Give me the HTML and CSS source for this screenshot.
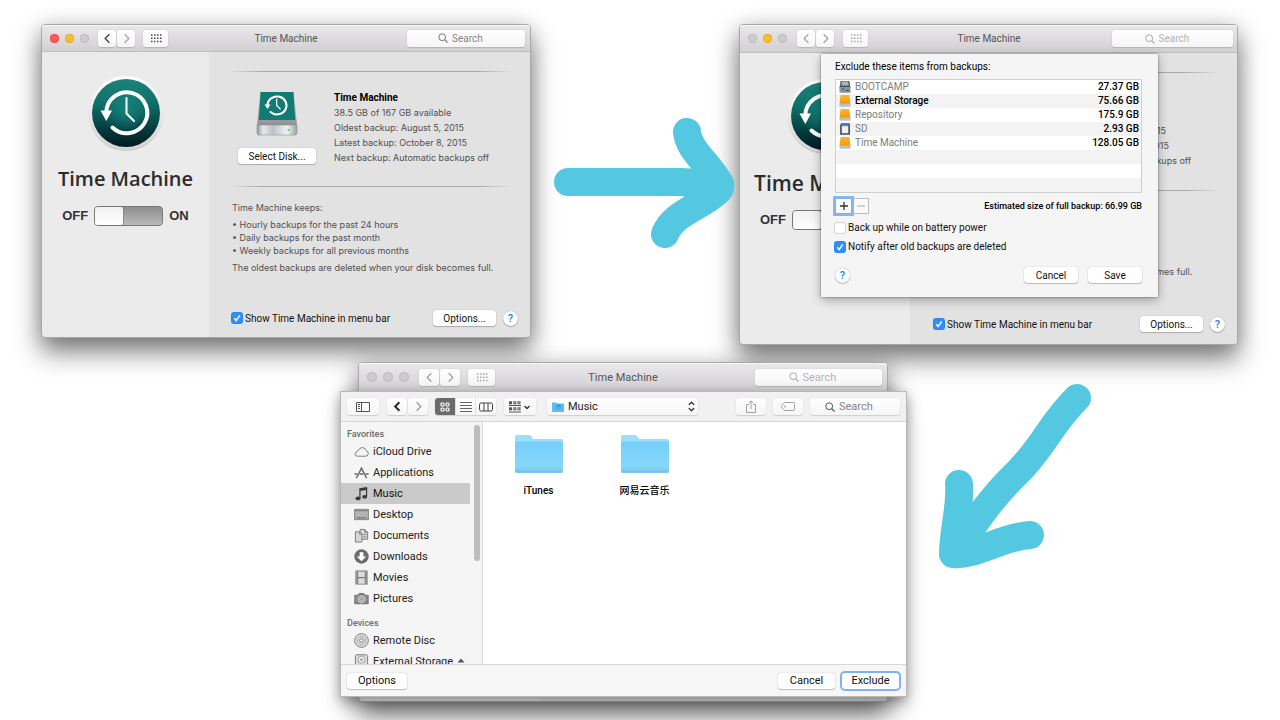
FILE: index.html
```html
<!DOCTYPE html>
<html lang="en">
<head>
<meta charset="utf-8">
<title>Time Machine</title>
<link rel="stylesheet" href="styles.css">
</head>
<body>
<svg class="defs" width="0" height="0" aria-hidden="true">
  <defs>
    <linearGradient id="g-teal" x1="0" y1="0" x2="0" y2="1"><stop offset="0" stop-color="#1d8279"/><stop offset=".35" stop-color="#10706a"/><stop offset=".75" stop-color="#04393c"/><stop offset="1" stop-color="#001a20"/></linearGradient>
    <radialGradient id="g-glow" cx=".5" cy=".5" r=".5"><stop offset="0" stop-color="#14857d" stop-opacity=".9"/><stop offset="1" stop-color="#14857d" stop-opacity="0"/></radialGradient>
    <linearGradient id="g-ring" x1="0" y1="0" x2="0" y2="1"><stop offset="0" stop-color="#fff"/><stop offset="1" stop-color="#d4d4d4"/></linearGradient>
    <linearGradient id="g-side" x1="0" y1="0" x2="0" y2="1"><stop offset="0" stop-color="#d5d7d7"/><stop offset="1" stop-color="#8d8f90"/></linearGradient>
    <linearGradient id="g-base" x1="0" y1="0" x2="1" y2="0"><stop offset="0" stop-color="#8e9698"/><stop offset=".15" stop-color="#e4e9ea"/><stop offset=".4" stop-color="#bcc3c5"/><stop offset=".75" stop-color="#eff2f2"/><stop offset="1" stop-color="#9aa1a3"/></linearGradient>
    <linearGradient id="g-orange" x1="0" y1="0" x2="0" y2="1"><stop offset="0" stop-color="#fbb829"/><stop offset="1" stop-color="#f59a0c"/></linearGradient>
    <linearGradient id="g-folder" x1="0" y1="0" x2="0" y2="1"><stop offset="0" stop-color="#74cff8"/><stop offset=".8" stop-color="#87d8fa"/><stop offset="1" stop-color="#71c5ec"/></linearGradient>
    <symbol id="i-clock" viewBox="0 0 76 76">
      <circle cx="38" cy="39" r="37" fill="#c9c9c9"/>
      <circle cx="38" cy="38" r="37" fill="url(#g-ring)"/>
      <circle cx="38" cy="38" r="34" fill="url(#g-teal)"/>
      <circle cx="38" cy="34" r="26" fill="url(#g-glow)"/>
      <path d="M18.300 37A20.500 20.500 0 1 1 24.500 52.500" fill="none" stroke="#fff" stroke-width="4" stroke-linecap="round"/>
      <path d="M12.500 35.500h11.500l-5.700 10.500z" fill="#fff"/>
      <path d="M38.500 23v15.500l7.500 7.500" fill="none" stroke="#fff" stroke-width="2" stroke-linecap="round"/>
    </symbol>
    <symbol id="i-disk" viewBox="0 0 42 46">
      <path d="M4 1h34l3 34H1z" fill="url(#g-side)"/>
      <path d="M4.500 1h33l1.700 28H2.800z" fill="#127c74"/>
      <path d="M1 34h40v8q0 2-2 2H3q-2 0-2-2z" fill="url(#g-base)" stroke="#8c9294" stroke-width=".6"/>
      <circle cx="32.500" cy="39" r="1" fill="#5ec93c"/>
      <path d="M11.500 14a9.500 9 0 1 1 3 7" fill="none" stroke="#fff" stroke-width="2" stroke-linecap="round"/>
      <path d="M8.500 13.500h6l-3 4.500z" fill="#fff"/>
      <path d="M20.700 8v6.500l3.500 3.500" fill="none" stroke="#fff" stroke-width="1.200" stroke-linecap="round"/>
    </symbol>
    <symbol id="i-left" viewBox="0 0 16 16"><path d="M10 3.500L5.500 8l4.500 4.500" fill="none" stroke="currentColor"/></symbol>
    <symbol id="i-right" viewBox="0 0 16 16"><path d="M6 3.500L10.500 8 6 12.500" fill="none" stroke="currentColor"/></symbol>
    <symbol id="i-grid" viewBox="0 0 12 9"><path d="M1 1h11M1 4.300h11M1 7.600h11" fill="none" stroke="currentColor" stroke-width="1.500" stroke-dasharray="1.500 1.500"/></symbol>
    <symbol id="i-find" viewBox="0 0 10 10"><circle cx="4.200" cy="4.200" r="3.400" fill="none" stroke="currentColor"/><path d="M6.700 6.700L9.500 9.500" stroke="currentColor" stroke-width="1.200"/></symbol>
    <symbol id="i-drive" viewBox="0 0 12 12"><path d="M1.500 0h9l.9 8.500H.6z" fill="url(#g-orange)"/><path d="M.5 8.500h11v2.500q0 .8-.8.800H1.300q-.8 0-.8-.8z" fill="#b9c3cd"/><path d="M.7 8.600h10.600" stroke="#d8931f" stroke-width=".6"/></symbol>
    <symbol id="i-internal" viewBox="0 0 12 12"><path d="M1.700 0h8.600l1.200 7H.5z" fill="#47525a"/><path d="M3 .5h6l.8 4H2.200z" fill="#a9b6be"/><path d="M.5 6h11v5.200q0 .6-.6.600H1.100q-.6 0-.6-.6z" fill="#87929a"/><path d="M3 8h2M7 9.500h3" stroke="#3c464d"/></symbol>
    <symbol id="i-sd" viewBox="0 0 12 12"><path d="M2.500.3h7.700l.8 1v9.900q0 .5-.5.500H1.600q-.5 0-.5-.5V1.800z" fill="#4a525a"/><path d="M2.800 2h6.500v8.200H2.800z" fill="#eef3f8"/><path d="M2.800 1.500h6.500v1.800H2.800z" fill="#4f93e0"/></symbol>
    <symbol id="i-folder" viewBox="0 0 48 38"><path d="M0 36V2Q0 0 2 0h12q1.500 0 2.500 1.500L18 4h28q2 0 2 2v30z" fill="#9bdffb"/><path d="M0 8q0-1.500 1.500-1.500h45Q48 6.500 48 8v28q0 1.500-1.500 1.500h-45Q0 37.500 0 36z" fill="url(#g-folder)"/><path d="M.5 37.300h47" stroke="#5fb0d6" stroke-width=".7"/></symbol>
  </defs>
</svg>

<main class="stage">
  <section class="window window-main" aria-label="Time Machine preferences">
    <header class="titlebar">
      <div class="tb-left">
        <div class="lights"><span class="light red"></span><span class="light yellow"></span><span class="light"></span></div>
        <div class="nav">
          <button class="tb-btn" aria-label="Back"><svg class="ic-nav"><use href="#i-left"/></svg></button>
          <button class="tb-btn faded" aria-label="Forward"><svg class="ic-nav"><use href="#i-right"/></svg></button>
        </div>
        <button class="tb-btn wide" aria-label="Show all"><svg class="ic-grid"><use href="#i-grid"/></svg></button>
      </div>
      <h1 class="title">Time Machine</h1>
      <label class="search"><svg class="ic-find"><use href="#i-find"/></svg><input type="text" placeholder="Search" aria-label="Search"></label>
    </header>
    <div class="panes">
      <div class="pane-left">
        <svg class="tm-icon"><use href="#i-clock"/></svg>
        <h2 class="brand">Time Machine</h2>
        <div class="power"><span>OFF</span><button class="switch" role="switch" aria-checked="false" aria-label="Time Machine"><span class="knob"></span></button><span>ON</span></div>
      </div>
      <div class="pane-right">
        <hr class="rule">
        <div class="disk-row">
          <div class="disk"><svg class="disk-icon"><use href="#i-disk"/></svg><button class="btn">Select Disk...</button></div>
          <div class="info"><strong>Time Machine</strong><span>38.5 GB of 167 GB available</span><span>Oldest backup: August 5, 2015</span><span>Latest backup: October 8, 2015</span><span>Next backup: Automatic backups off</span></div>
        </div>
        <hr class="rule">
        <div class="keeps">
          <p>Time Machine keeps:</p>
          <ul><li>Hourly backups for the past 24 hours</li><li>Daily backups for the past month</li><li>Weekly backups for all previous months</li></ul>
          <p>The oldest backups are deleted when your disk becomes full.</p>
        </div>
        <footer class="pane-foot">
          <label class="check"><input type="checkbox" checked>Show Time Machine in menu bar</label>
          <button class="btn">Options...</button>
          <button class="help" aria-label="Help">?</button>
        </footer>
      </div>
    </div>
  </section>

  <section class="window window-exclude inactive" aria-label="Time Machine exclusions">
    <header class="titlebar">
      <div class="tb-left">
        <div class="lights"><span class="light"></span><span class="light yellow"></span><span class="light"></span></div>
        <div class="nav">
          <button class="tb-btn" aria-label="Back"><svg class="ic-nav"><use href="#i-left"/></svg></button>
          <button class="tb-btn" aria-label="Forward"><svg class="ic-nav"><use href="#i-right"/></svg></button>
        </div>
        <button class="tb-btn wide" aria-label="Show all"><svg class="ic-grid"><use href="#i-grid"/></svg></button>
      </div>
      <h1 class="title">Time Machine</h1>
      <label class="search"><svg class="ic-find"><use href="#i-find"/></svg><input type="text" placeholder="Search" aria-label="Search"></label>
    </header>
    <div class="panes">
      <div class="pane-left">
        <svg class="tm-icon"><use href="#i-clock"/></svg>
        <h2 class="brand">Time Machine</h2>
        <div class="power"><span>OFF</span><button class="switch" role="switch" aria-checked="false" aria-label="Time Machine"><span class="knob"></span></button></div>
      </div>
      <div class="pane-right">
        <hr class="rule">
        <div class="disk-row">
          <div class="disk"></div>
          <div class="info"><strong>Time Machine</strong><span>38.5 GB of 167 GB available</span><span>Oldest backup: August 5, 2015</span><span>Latest backup: October 8, 2015</span><span>Next backup: Automatic backups off</span></div>
        </div>
        <hr class="rule">
        <div class="keeps">
          <p>Time Machine keeps:</p>
          <ul><li>Hourly backups for the past 24 hours</li><li>Daily backups for the past month</li><li>Weekly backups for all previous months</li></ul>
          <p>The oldest backups are deleted when your disk becomes full.</p>
        </div>
        <footer class="pane-foot">
          <label class="check"><input type="checkbox" checked>Show Time Machine in menu bar</label>
          <button class="btn">Options...</button>
          <button class="help" aria-label="Help">?</button>
        </footer>
      </div>
    </div>

    <div class="sheet" role="dialog" aria-labelledby="sheet-title">
      <h2 class="sheet-title" id="sheet-title">Exclude these items from backups:</h2>
      <table class="items">
        <tbody>
          <tr><td><svg class="ic-row"><use href="#i-internal"/></svg></td><td class="name">BOOTCAMP</td><td class="size">27.37 GB</td></tr>
          <tr class="on"><td><svg class="ic-row"><use href="#i-drive"/></svg></td><td class="name">External Storage</td><td class="size">75.66 GB</td></tr>
          <tr><td><svg class="ic-row"><use href="#i-drive"/></svg></td><td class="name">Repository</td><td class="size">175.9 GB</td></tr>
          <tr><td><svg class="ic-row"><use href="#i-sd"/></svg></td><td class="name">SD</td><td class="size">2.93 GB</td></tr>
          <tr><td><svg class="ic-row"><use href="#i-drive"/></svg></td><td class="name">Time Machine</td><td class="size">128.05 GB</td></tr>
          <tr><td></td><td></td><td></td></tr>
          <tr><td></td><td></td><td></td></tr>
          <tr><td></td><td></td><td></td></tr>
        </tbody>
      </table>
      <div class="edit-row">
        <button class="sq focus" aria-label="Add"><svg width="10" height="10"><path d="M5 1v8M1 5h8" stroke="#333" stroke-width="1.300"/></svg></button>
        <button class="sq" aria-label="Remove" disabled><svg width="10" height="10"><path d="M1 5h8" stroke="#b5b5b5" stroke-width="1.200"/></svg></button>
        <span class="estimate">Estimated size of full backup: 66.99 GB</span>
      </div>
      <label class="check"><input type="checkbox">Back up while on battery power</label>
      <label class="check"><input type="checkbox" checked>Notify after old backups are deleted</label>
      <div class="sheet-foot">
        <button class="help" aria-label="Help">?</button>
        <button class="btn">Cancel</button>
        <button class="btn">Save</button>
      </div>
    </div>
  </section>

  <section class="window window-back inactive" aria-label="Time Machine">
    <header class="titlebar">
      <div class="tb-left">
        <div class="lights"><span class="light"></span><span class="light"></span><span class="light"></span></div>
        <div class="nav">
          <button class="tb-btn" aria-label="Back"><svg class="ic-nav"><use href="#i-left"/></svg></button>
          <button class="tb-btn" aria-label="Forward"><svg class="ic-nav"><use href="#i-right"/></svg></button>
        </div>
        <button class="tb-btn wide" aria-label="Show all"><svg class="ic-grid"><use href="#i-grid"/></svg></button>
      </div>
      <h1 class="title">Time Machine</h1>
      <label class="search"><svg class="ic-find"><use href="#i-find"/></svg><input type="text" placeholder="Search" aria-label="Search"></label>
    </header>
    <div class="panes"><div class="pane-left"></div><div class="pane-right"></div></div>
  </section>

  <section class="picker" role="dialog" aria-label="Choose a folder to exclude">
    <header class="toolbar">
      <button class="tool t-side" aria-label="Sidebar"><svg width="14" height="10"><path d="M.5.5h13v9H.5zM5.500.5v9M2 2.500h2M2 4.500h2M2 6.500h2" fill="none" stroke="#555"/></svg></button>
      <div class="nav">
        <button class="tool t-nav strong" aria-label="Back"><svg class="ic-nav"><use href="#i-left"/></svg></button>
        <button class="tool t-nav faded" aria-label="Forward"><svg class="ic-nav"><use href="#i-right"/></svg></button>
      </div>
      <div class="seg">
        <button class="active" aria-label="Icons"><svg width="10" height="10" fill="none" stroke="#fff" stroke-width="1.200"><rect x="1" y="1" width="3" height="3" rx="1"/><rect x="6" y="1" width="3" height="3" rx="1"/><rect x="1" y="6" width="3" height="3" rx="1"/><rect x="6" y="6" width="3" height="3" rx="1"/></svg></button>
        <button aria-label="List"><svg width="12" height="10"><path d="M0 .5h12M0 3.500h12M0 6.500h12M0 9.500h12" stroke="#666"/></svg></button>
        <button aria-label="Columns"><svg width="14" height="10"><rect x=".5" y="1" width="13" height="8" rx="1.500" fill="none" stroke="#444"/><path d="M5 1v8M9 1v8" stroke="#444"/></svg></button>
      </div>
      <button class="tool t-arr" aria-label="Arrange"><svg width="22" height="12" fill="none" stroke="#555"><path d="M0 4.500h12M0 11h12" /><g stroke-width="1"><rect x=".5" y=".8" width="2" height="2"/><rect x="4.800" y=".8" width="2" height="2"/><rect x="9" y=".8" width="2" height="2"/><rect x=".5" y="6.800" width="2" height="2"/><rect x="4.800" y="6.800" width="2" height="2"/><rect x="9" y="6.800" width="2" height="2"/></g><path d="M15.500 5l2.500 2.500L20.500 5" stroke="#333" stroke-width="1.400"/></svg></button>
      <div class="where">
        <svg class="where-folder" viewBox="0 0 12 10"><path d="M0 9V1q0-.5.5-.5h3.500l1 1H11.500q.5 0 .5.500v7.500q0 .5-.5.500H.5Q0 9.500 0 9z" fill="#5bbdf0"/><path d="M5 7.500V3.500l3-.5v4" fill="none" stroke="#1c7fb5" stroke-width=".8"/></svg>
        <select aria-label="Location"><option>Music</option></select>
        <svg class="where-arrows" viewBox="0 0 8 12"><path d="M1.500 4.500L4 2l2.500 2.500M1.500 7.500L4 10l2.500-2.500" fill="none" stroke="#333" stroke-width="1.300"/></svg>
      </div>
      <button class="tool t-act push" aria-label="Share"><svg width="10" height="13" fill="none" stroke="#a0a0a0"><path d="M3 4.500H.5v8h9v-8H7M5 9V1M2.800 3L5 .8 7.200 3"/></svg></button>
      <button class="tool t-act" aria-label="Tags"><svg width="14" height="9" fill="none" stroke="#a0a0a0"><path d="M4 .5h8.500q1 0 1 1v6q0 1-1 1H4Q2.500 8 .7 5.300V3.700Q2.500 1 4 .5z"/><circle cx="4" cy="4.500" r=".6"/></svg></button>
      <label class="search"><svg class="ic-find"><use href="#i-find"/></svg><input type="text" placeholder="Search" aria-label="Search files"></label>
    </header>
    <div class="browser">
      <nav class="sidebar" aria-label="Places">
        <h3>Favorites</h3>
        <ul>
          <li><a href="#"><svg viewBox="0 0 16 16"><path d="M4 13h8.500a3 3 0 0 0 .5-5.900A4.200 4.200 0 0 0 5 6.500 2.500 2.500 0 0 0 3 8.500 2.300 2.300 0 0 0 4 13z" fill="none" stroke="#777"/></svg>iCloud Drive</a></li>
          <li><a href="#"><svg viewBox="0 0 16 16" fill="none" stroke="#666"><path d="M2.500 14L8.500 2.500M13.500 14L7.500 2.500" stroke-width="1.500"/><path d="M.5 9.500h3M6 9.500h4M12.500 9.500h3" stroke-width="1.600"/></svg>Applications</a></li>
          <li class="current"><a href="#"><svg viewBox="0 0 16 16"><path d="M5.700 2.500L14 1v3L7 5.200" fill="#3a3a3a"/><path d="M6.300 3v10M13.400 2v9" stroke="#3a3a3a" stroke-width="1.300"/><ellipse cx="4.300" cy="13.300" rx="2.700" ry="2" fill="#3a3a3a"/><ellipse cx="11.400" cy="11.500" rx="2.600" ry="2" fill="#3a3a3a"/></svg>Music</a></li>
          <li><a href="#"><svg viewBox="0 0 16 16"><rect x=".7" y="2.500" width="14.600" height="11" fill="#b4b4b4" stroke="#808080"/><path d="M1 4h14" stroke="#777"/><path d="M3 11.500h10" stroke="#666" stroke-width="1.500" stroke-dasharray="1.500 .7"/></svg>Desktop</a></li>
          <li><a href="#"><svg viewBox="0 0 16 16" fill="#d8d8d8" stroke="#777"><path d="M6.500 1.500h5l3 3v7.500h-8z"/><path d="M11.500 1.500v3h3" fill="none"/><path d="M1.500 4h4.500l2.500 2.500V15h-7z"/><path d="M6 4v2.500h2.500M10 7h3M10 9.500h3" fill="none"/></svg>Documents</a></li>
          <li><a href="#"><svg viewBox="0 0 16 16"><circle cx="8" cy="8" r="7.700" fill="#6c6c6c"/><path d="M6 3.500h4V8h3l-5 5-5-5h3z" fill="#fff"/></svg>Downloads</a></li>
          <li><a href="#"><svg viewBox="0 0 16 16"><path d="M1.500.5h13v15h-13z" fill="#777"/><path d="M4.500 1.500h7v6h-7zM4.500 8.700h7v6h-7z" fill="#dcdcdc"/><path d="M3 1v14M13 1v14" stroke="#ddd" stroke-dasharray="1.200 1.200"/></svg>Movies</a></li>
          <li><a href="#"><svg viewBox="0 0 16 16"><path d="M.3 5q0-1 1-1h3l1.200-2h5l1.200 2h3q1 0 1 1v8q0 1-1 1H1.300q-1 0-1-1z" fill="#777"/><circle cx="8" cy="8.800" r="4" fill="#999" stroke="#ddd" stroke-width=".9"/><circle cx="8" cy="8.800" r="2" fill="none" stroke="#ddd" stroke-width=".8"/><path d="M2.500 4v10M13.500 4v10" stroke="#aaa" stroke-width=".7"/></svg>Pictures</a></li>
        </ul>
        <h3>Devices</h3>
        <ul>
          <li><a href="#"><svg viewBox="0 0 16 16" fill="none" stroke="#777"><circle cx="8" cy="8" r="7.300" fill="#dedede"/><circle cx="8" cy="8" r="4.500" stroke="#999" stroke-width=".8"/><circle cx="8" cy="8" r="2" fill="#f5f5f5"/></svg>Remote Disc</a></li>
          <li><a href="#"><svg viewBox="0 0 16 16" fill="none" stroke="#777"><path d="M2.500.8h11l1 1.500V15h-13V2.300z" fill="#dedede"/><circle cx="8" cy="6" r="3.800" fill="#f2f2f2" stroke="#999"/><circle cx="8" cy="6" r="1"/><path d="M1.500 11.500h13" stroke="#999"/></svg>External Storage<svg class="eject" viewBox="0 0 8 8"><path d="M4 .5L7.500 4.500h-7zM.5 6h7v1.200h-7z" fill="#555"/></svg></a></li>
        </ul>
        <span class="scrollbar"></span>
      </nav>
      <div class="files">
        <figure><svg class="folder"><use href="#i-folder"/></svg><figcaption>iTunes</figcaption></figure>
        <figure><svg class="folder"><use href="#i-folder"/></svg><figcaption lang="zh">网易云音乐</figcaption></figure>
      </div>
    </div>
    <footer class="picker-foot">
      <button class="btn">Options</button>
      <button class="btn push">Cancel</button>
      <button class="btn default">Exclude</button>
    </footer>
  </section>

  <svg class="arrow arrow-right" viewBox="0 0 190 140" aria-hidden="true"><path d="M18 67h112l40 2M137 17C139 36 158 47 170 68.500Q171 72 169 75C152 92 124 97 115 119" /><path class="fill" d="M130 60L165 60 165 85 135 85z"/></svg>
  <svg class="arrow arrow-down" viewBox="0 0 170 200" aria-hidden="true"><path d="M146 22C120 47 112 72 85 98 60 122 45 145 23 177M28 108C30 130 22 155 22 178C45 180 70 161 99 159"/></svg>
</main>
</body>
</html>
```
FILE: styles.css
```css
* { box-sizing: border-box; }

body {
  margin: 0;
  background: #fff;
  color: #1c1c1c;
  font: 10px/15px Roboto, "Liberation Sans", "Noto Sans CJK SC", sans-serif;
}

h1, h2, h3, p, ul, figure { margin: 0; padding: 0; font: inherit; }
ul { list-style: none; }
button, input, select { font: inherit; color: inherit; margin: 0; padding: 0; border: 0; background: none; }
svg { display: block; flex: none; }
a { color: inherit; text-decoration: none; }
.defs { position: absolute; }

.stage { position: relative; min-height: 100vh; overflow: hidden; }

/* Windows on the canvas */
.window {
  position: absolute;
  display: flex;
  flex-direction: column;
  border: 1px solid #a8a8a8;
  border-radius: 4px;
  background: #ebebeb;
  box-shadow: 0 14px 26px rgba(0, 0, 0, .5), 0 0 20px rgba(0, 0, 0, .14);
}
.window-main { left: 41px; top: 24px; width: 490px; height: 314px; --bar: 27px; --left: 167px; --search: 118px; --inset: 23px; }
.window-exclude { left: 739px; top: 24px; width: 499px; height: 321px; --bar: 28px; --left: 170px; --search: 121px; --inset: 21px; }
.window-back { left: 358px; top: 362px; width: 530px; height: 340px; font-size: 11px; --bar: 29px; --left: 181px; --search: 127px; --inset: 23px; }

.titlebar {
  display: grid;
  grid-template-columns: 1fr auto 1fr;
  align-items: center;
  height: var(--bar);
  padding: 0 5px;
  border-bottom: 1px solid #bebcbf;
  border-radius: 3px 3px 0 0;
  background: linear-gradient(#eae8eb, #d2d0d3);
  box-shadow: inset 0 1px #f7f6f7;
}
.title { color: #555; }
.tb-left, .lights, .nav { display: flex; align-items: center; }
.lights { gap: 6px; margin: 0 9px 0 3px; }
.inactive .lights { margin-right: 10px; }
.nav { gap: 1px; }
.light { width: 9px; height: 9px; border-radius: 50%; background: #cdcbcd; box-shadow: 0 0 0 1px #bdbbbd inset; }
.red { background: #fc5b57; box-shadow: 0 0 0 1px #e5514e inset; }
.yellow { background: #fdbe2d; box-shadow: 0 0 0 1px #eaa925 inset; }
.window-back .light { width: 10px; height: 10px; }

.tb-btn, .tool, .search, .seg, .where {
  display: flex;
  align-items: center;
  justify-content: center;
  height: 17px;
  border-radius: 3px;
  background: linear-gradient(#fff, #f5f5f5);
  box-shadow: 0 0 1px rgba(0, 0, 0, .25), 0 1px 1px rgba(0, 0, 0, .12);
}
.tb-btn { width: 18px; color: #444; }
.tb-btn.wide { width: 25px; margin-left: 8px; }
.faded, .inactive .tb-btn { color: #a5a5a5; }
.window-exclude .tb-btn.wide { margin-left: 9px; }
.window-back .tb-btn { width: 20px; }
.window-back .tb-btn.wide { width: 27px; }
.ic-nav { width: 15px; height: 15px; stroke-width: 1.400; }
.strong .ic-nav { stroke-width: 2; }
.ic-grid { width: 12px; height: 9px; }

.search { justify-self: end; gap: 4px; width: var(--search); color: #777; }
.search input { width: 42px; outline: 0; }
.search input::placeholder { color: #868686; opacity: 1; }
.inactive .search { color: #aaa; }
.inactive .search input::placeholder { color: #b4b4b4; }
.window-exclude .titlebar { padding-right: 4px; }
.ic-find { width: 10px; height: 10px; }

/* Preference panes */
.panes { display: flex; flex: 1; border-radius: 0 0 3px 3px; overflow: hidden; }
.pane-left { display: flex; flex-direction: column; align-items: center; width: var(--left); padding-top: 23px; }
.pane-right { display: flex; flex: 1; flex-direction: column; background: #e2e2e2; }
.tm-icon { width: 76px; height: 76px; }
.window-exclude .pane-left { padding-top: 25px; }
.brand { margin-top: 14px; font: 600 20px/28px "Open Sans", "Noto Sans", sans-serif; color: #2c2c2c; }
.power { display: flex; align-items: center; gap: 6px; margin-top: 13px; font: 700 13px/20px "Liberation Sans", Arial, sans-serif; color: #333; }
.window-exclude .brand { margin-top: 15px; font-size: 21px; }
.window-exclude .power { align-self: flex-start; margin-left: 20px; }
.switch { width: 69px; height: 20px; border: 1px solid #777; border-radius: 4px; background: linear-gradient(#8e8e8e, #bababa); }
.knob { display: block; width: 29px; height: 18px; border-right: 1px solid #888; border-radius: 3px; background: linear-gradient(#f2f2f2, #fff); }

.rule {
  width: auto;
  height: 1px;
  margin: 0 18px 0 19px;
  border: 0;
  background: linear-gradient(90deg, rgba(150, 150, 150, 0), #a9a9a9 12%, #a9a9a9 88%, rgba(150, 150, 150, 0));
}
.pane-right > .rule:first-child { margin-top: 19px; }
.disk-row { display: flex; gap: 18px; min-height: 114px; padding: 18px 0 0 calc(var(--inset) + 6px); }
.window-exclude .disk-row { min-height: 117px; padding: 20px 0 0 30px; }
.disk { display: flex; flex-direction: column; align-items: center; gap: 11px; width: 78px; padding-top: 1px; }
.disk .btn { width: 100%; }
.disk-icon { width: 42px; height: 46px; }
.info { display: flex; flex-direction: column; font: 9px/15px Inter, Roboto, sans-serif; color: #505050; }
.info strong { font: 700 10px/15px Roboto, sans-serif; color: #000; }
.keeps { padding: 14px 0 0 var(--inset); font: 9px/13px Inter, Roboto, sans-serif; color: #505050; }
.keeps ul { margin: 4px 0; }
.keeps li::before { content: "• "; }

.pane-foot { display: flex; align-items: center; margin-top: auto; padding: 0 12px 11px 23px; }
.pane-foot .btn { width: 63px; margin: 0 7px 0 auto; }
.window-exclude .pane-foot { padding: 0 12px 12px 24px; }

.btn {
  height: 16px;
  border-radius: 3px;
  background: #fff;
  color: #111;
  box-shadow: 0 0 1px rgba(0, 0, 0, .4), 0 1px 1px rgba(0, 0, 0, .2);
}
.help { width: 15px; height: 15px; border-radius: 50%; background: #fff; color: #1a80f5; font-weight: 500; font-size: 11px; line-height: 15px; box-shadow: 0 0 1px rgba(0, 0, 0, .4), 0 1px 1px rgba(0, 0, 0, .2); }

.check { display: flex; align-items: center; gap: 3px; color: #111; }
.check input { appearance: none; width: 10px; height: 10px; border-radius: 2px; background: #fff; box-shadow: 0 0 0 1px #d2d2d2; }
.check input:checked {
  background: #2f8ef7 url("data:image/svg+xml,%3Csvg xmlns='http://www.w3.org/2000/svg' viewBox='0 0 10 10'%3E%3Cpath d='M2.200 5.200l2 2.300L7.800 2.300' fill='none' stroke='white' stroke-width='1.400'/%3E%3C/svg%3E");
  box-shadow: 0 0 0 1px #2a85ee;
}

/* Exclusion sheet hanging over the window */
.sheet {
  position: absolute;
  left: 81px;
  top: 29px;
  width: 337px;
  padding: 5px 16px 14px 14px;
  background: #f5f5f5;
  box-shadow: 0 0 2px rgba(0, 0, 0, .5), 0 3px 10px rgba(0, 0, 0, .3);
}
.sheet-title { color: #000; line-height: 15px; margin-bottom: 5px; }
.items { width: 100%; border: 1px solid #cfcfcf; border-spacing: 0; background: #fff; }
.items tr { height: 14px; }
.items tr:nth-child(even) { background: #f3f3f3; }
.items td { padding: 0; line-height: 14px; }
.items td:first-child { width: 19px; padding-left: 3px; }
.items .name { color: #7c7c7c; }
.items .on .name { color: #000; font-weight: 500; }
.items .size { padding-right: 2px; text-align: right; color: #000; font-weight: 500; }
.ic-row { width: 12px; height: 12px; }
.edit-row { display: flex; align-items: center; margin: 5px 0 6px; }
.sq { display: flex; align-items: center; justify-content: center; width: 17px; height: 16px; border: 1px solid #bcbcbc; background: #fafafa; }
.sq.focus { box-shadow: 0 0 0 2px #85b7f0; border-color: #7fb0e8; z-index: 1; }
.estimate { margin-left: auto; font-size: 9px; font-weight: 500; color: #000; }
.sheet .check { margin: 0 0 4px; }
.sheet-foot { display: flex; align-items: center; gap: 10px; margin-top: 13px; }
.sheet-foot .btn { width: 54px; }
.sheet-foot .help { margin-right: auto; }

/* File picker */
.picker {
  position: absolute;
  left: 340px;
  top: 391px;
  display: flex;
  flex-direction: column;
  width: 567px;
  height: 306px;
  border: 1px solid #b8b8b8;
  background: #f6f6f6;
  color: #222;
  font-size: 11px;
  box-shadow: 0 4px 12px rgba(0, 0, 0, .35), 0 12px 20px rgba(0, 0, 0, .12);
}
.toolbar { display: flex; align-items: center; height: 30px; padding: 0 6px; border-bottom: 1px solid #d5d5d5; background: #f1f1f1; }
.tool { color: #222; }
.tool.faded { color: #999; }
.t-side { width: 32px; margin-right: 8px; }
.t-nav { width: 20px; }
.seg { width: 61px; margin: 0 8px 0 7px; overflow: hidden; }
.seg button { display: flex; flex: 1; align-items: center; justify-content: center; height: 100%; border-right: 1px solid #e2e2e2; }
.seg button:last-child { border: 0; }
.seg .active { background: #6b6b6b; }
.t-arr { width: 32px; margin-right: 11px; }
.where { position: relative; width: 151px; }
.where select { width: 100%; height: 100%; padding-left: 21px; appearance: none; outline: 0; }
.where-folder { position: absolute; left: 5px; top: 4px; width: 12px; height: 10px; pointer-events: none; }
.where-arrows { position: absolute; right: 2px; top: 2px; width: 9px; height: 13px; pointer-events: none; }
.push { margin-left: auto; }
.t-act { width: 30px; margin-right: 7px; }
.toolbar .search { width: 90px; color: #555; }
.toolbar .search input, .window-back .search input { width: 46px; }

.browser { display: flex; flex: 1; min-height: 0; }
.sidebar { position: relative; width: 142px; border-right: 1px solid #dcdcdc; background: #f5f5f5; overflow: hidden; }
.sidebar h3 { padding: 5px 0 0 6px; font-size: 9px; line-height: 14px; font-weight: 500; color: #6c6c6c; }
.sidebar ul + h3 { padding-top: 7px; }
.sidebar a { display: flex; align-items: center; gap: 4px; width: 129px; height: 21px; padding-left: 13px; }
.sidebar svg { width: 15px; height: 15px; }
.sidebar .eject { width: 8px; height: 8px; }
.current a { background: #cacaca; color: #111; }
.scrollbar { position: absolute; right: 2px; top: 3px; width: 6px; height: 136px; border-radius: 3px; background: #bdbdbd; }

.files { display: flex; flex: 1; align-items: flex-start; gap: 45px; padding: 13px 25px; background: #fff; }
.files figure { display: flex; flex-direction: column; align-items: center; gap: 11px; width: 61px; }
.folder { width: 48px; height: 38px; }
.files figcaption { font-size: 10px; font-weight: 500; line-height: 14px; color: #000; white-space: nowrap; }

.picker-foot { display: flex; align-items: center; gap: 7px; height: 32px; padding: 0 7px 0 6px; border-top: 1px solid #d8d8d8; background: #f6f6f6; }
.picker-foot .btn { width: 57px; }
.picker-foot .btn:first-child { width: 60px; }
.picker-foot .default { box-shadow: 0 0 0 2px #7fb2f0; }

/* Hand-drawn arrows */
.arrow { position: absolute; fill: none; stroke: #55c8e1; stroke-width: 28; stroke-linecap: round; stroke-linejoin: round; pointer-events: none; }
.arrow .fill { fill: #55c8e1; stroke: none; }
.arrow-right { left: 550px; top: 115px; width: 190px; height: 140px; }
.arrow-down { left: 931px; top: 376px; width: 170px; height: 200px; }
```
